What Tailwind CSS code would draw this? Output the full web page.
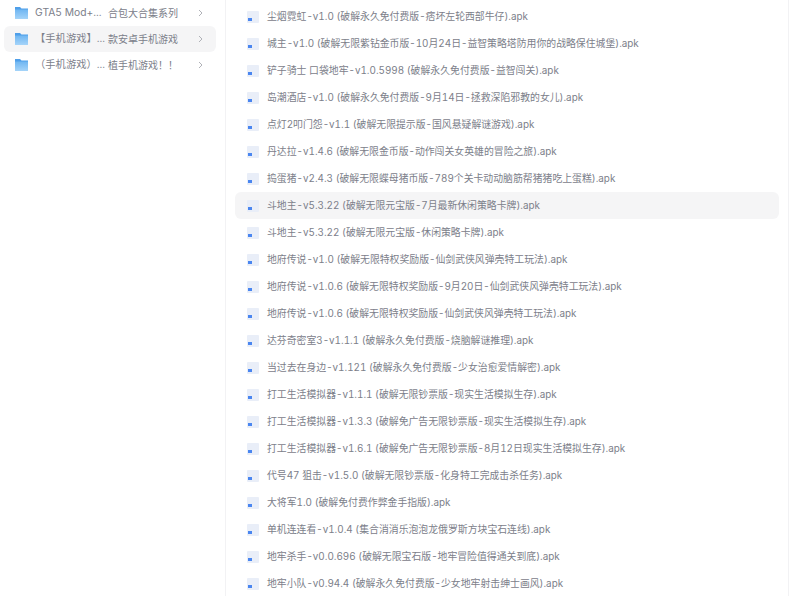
<!DOCTYPE html>
<html lang="zh-CN">
<head>
  <meta charset="UTF-8">
  <title>文件列表</title>
  <script src="https://cdn.jsdelivr.net/npm/@tailwindcss/browser@4"></script>
</head>
<body class="h-[596px] w-[800px] overflow-hidden bg-white font-['Inter','Noto_Sans_CJK_SC',sans-serif] text-[9.87px] tabular-nums text-[#7c808a]">
  <svg class="absolute h-0 w-0">
    <defs>
      <linearGradient id="folder" x1="0" y1="0" x2="0" y2="1">
        <stop offset="0" stop-color="#6fb6f2"/>
        <stop offset="1" stop-color="#a5d4f9"/>
      </linearGradient>
      <g id="folder-icon">
        <path d="M0 0h5l1.5 1.5H13V3H0z" fill="#4f9fe9"/>
        <rect y="2.5" width="13" height="9.5" fill="url(#folder)"/>
      </g>
      <path id="chevron" d="M1 1l3 3-3 3" fill="none" stroke="#b0b2b8" stroke-width="1"/>
    </defs>
  </svg>
  <div class="flex h-full">
    <aside class="w-[226px] shrink-0 border-r border-[#f2f2f4] pl-1 pr-[9px]">
      <div class="flex h-[26px] items-center rounded-md pl-[11px]">
        <svg class="h-3 w-[13px] shrink-0" viewBox="0 0 13 12"><use href="#folder-icon"/></svg>
        <span class="ml-[7px] w-[73px] shrink-0 whitespace-nowrap text-[10.3px]">GTA5 Mod+...</span>
        <span class="whitespace-nowrap text-[10px]">合包大合集系列</span>
        <svg class="ml-[20px] h-2 w-[5px] shrink-0" viewBox="0 0 5 8"><use href="#chevron"/></svg>
      </div>
      <div class="flex h-[26px] items-center rounded-md bg-[#f5f5f6] pl-[11px]">
        <svg class="h-3 w-[13px] shrink-0" viewBox="0 0 13 12"><use href="#folder-icon"/></svg>
        <span class="ml-[7px] w-[73px] shrink-0 whitespace-nowrap text-[10.3px]">【手机游戏】...</span>
        <span class="whitespace-nowrap text-[10px]">款安卓手机游戏</span>
        <svg class="ml-[20px] h-2 w-[5px] shrink-0" viewBox="0 0 5 8"><use href="#chevron"/></svg>
      </div>
      <div class="flex h-[26px] items-center rounded-md pl-[11px]">
        <svg class="h-3 w-[13px] shrink-0" viewBox="0 0 13 12"><use href="#folder-icon"/></svg>
        <span class="ml-[7px] w-[73px] shrink-0 whitespace-nowrap text-[10.3px]">（手机游戏）...</span>
        <span class="w-[70px] shrink-0 whitespace-nowrap text-[10px]">植手机游戏！！</span>
        <svg class="ml-[20px] h-2 w-[5px] shrink-0" viewBox="0 0 5 8"><use href="#chevron"/></svg>
      </div>
    </aside>
    <main class="w-[563px] shrink-0 border-r border-[#f2f2f4] px-[9px] pt-[3px]" id="list"></main>
  </div>
  <script>
    const names = [
      '尘烟霓虹-v1.0 (破解永久免付费版-痞坏左轮西部牛仔).apk',
      '城主-v1.0 (破解无限紫钻金币版-10月24日-益智策略塔防用你的战略保住城堡).apk',
      '铲子骑士 口袋地牢-v1.0.5998 (破解永久免付费版-益智闯关).apk',
      '岛潮酒店-v1.0 (破解永久免付费版-9月14日-拯救深陷邪教的女儿).apk',
      '点灯2叩门怨-v1.1 (破解无限提示版-国风悬疑解谜游戏).apk',
      '丹达拉-v1.4.6 (破解无限金币版-动作闯关女英雄的冒险之旅).apk',
      '捣蛋猪-v2.4.3 (破解无限蝶母猪币版-789个关卡动动脑筋帮猪猪吃上蛋糕).apk',
      '斗地主-v5.3.22 (破解无限元宝版-7月最新休闲策略卡牌).apk',
      '斗地主-v5.3.22 (破解无限元宝版-休闲策略卡牌).apk',
      '地府传说-v1.0 (破解无限特权奖励版-仙剑武侠风弹壳特工玩法).apk',
      '地府传说-v1.0.6 (破解无限特权奖励版-9月20日-仙剑武侠风弹壳特工玩法).apk',
      '地府传说-v1.0.6 (破解无限特权奖励版-仙剑武侠风弹壳特工玩法).apk',
      '达芬奇密室3-v1.1.1 (破解永久免付费版-烧脑解谜推理).apk',
      '当过去在身边-v1.121 (破解永久免付费版-少女治愈爱情解密).apk',
      '打工生活模拟器-v1.1.1 (破解无限钞票版-现实生活模拟生存).apk',
      '打工生活模拟器-v1.3.3 (破解免广告无限钞票版-现实生活模拟生存).apk',
      '打工生活模拟器-v1.6.1 (破解免广告无限钞票版-8月12日现实生活模拟生存).apk',
      '代号47 狙击-v1.5.0 (破解无限钞票版-化身特工完成击杀任务).apk',
      '大将军1.0 (破解免付费作弊金手指版).apk',
      '单机连连看-v1.0.4 (集合消消乐泡泡龙俄罗斯方块宝石连线).apk',
      '地牢杀手-v0.0.696 (破解无限宝石版-地牢冒险值得通关到底).apk',
      '地牢小队-v0.94.4 (破解永久免付费版-少女地牢射击绅士画风).apk'
    ];
    document.getElementById('list').innerHTML = names.map((name, i) => `
      <div class="flex h-[27px] items-center rounded-md pl-3 ${i === 7 ? 'bg-[#f5f5f6]' : ''}">
        <svg class="h-3 w-3 shrink-0" viewBox="0 0 12 12"><rect width="12" height="12" rx="1" fill="#e9eef8"/><rect x="1" y="7" width="4" height="3" fill="#4a86f0"/></svg>
        <span class="ml-2 whitespace-nowrap">${name}</span>
      </div>`).join('');
  </script>
</body>
</html>
